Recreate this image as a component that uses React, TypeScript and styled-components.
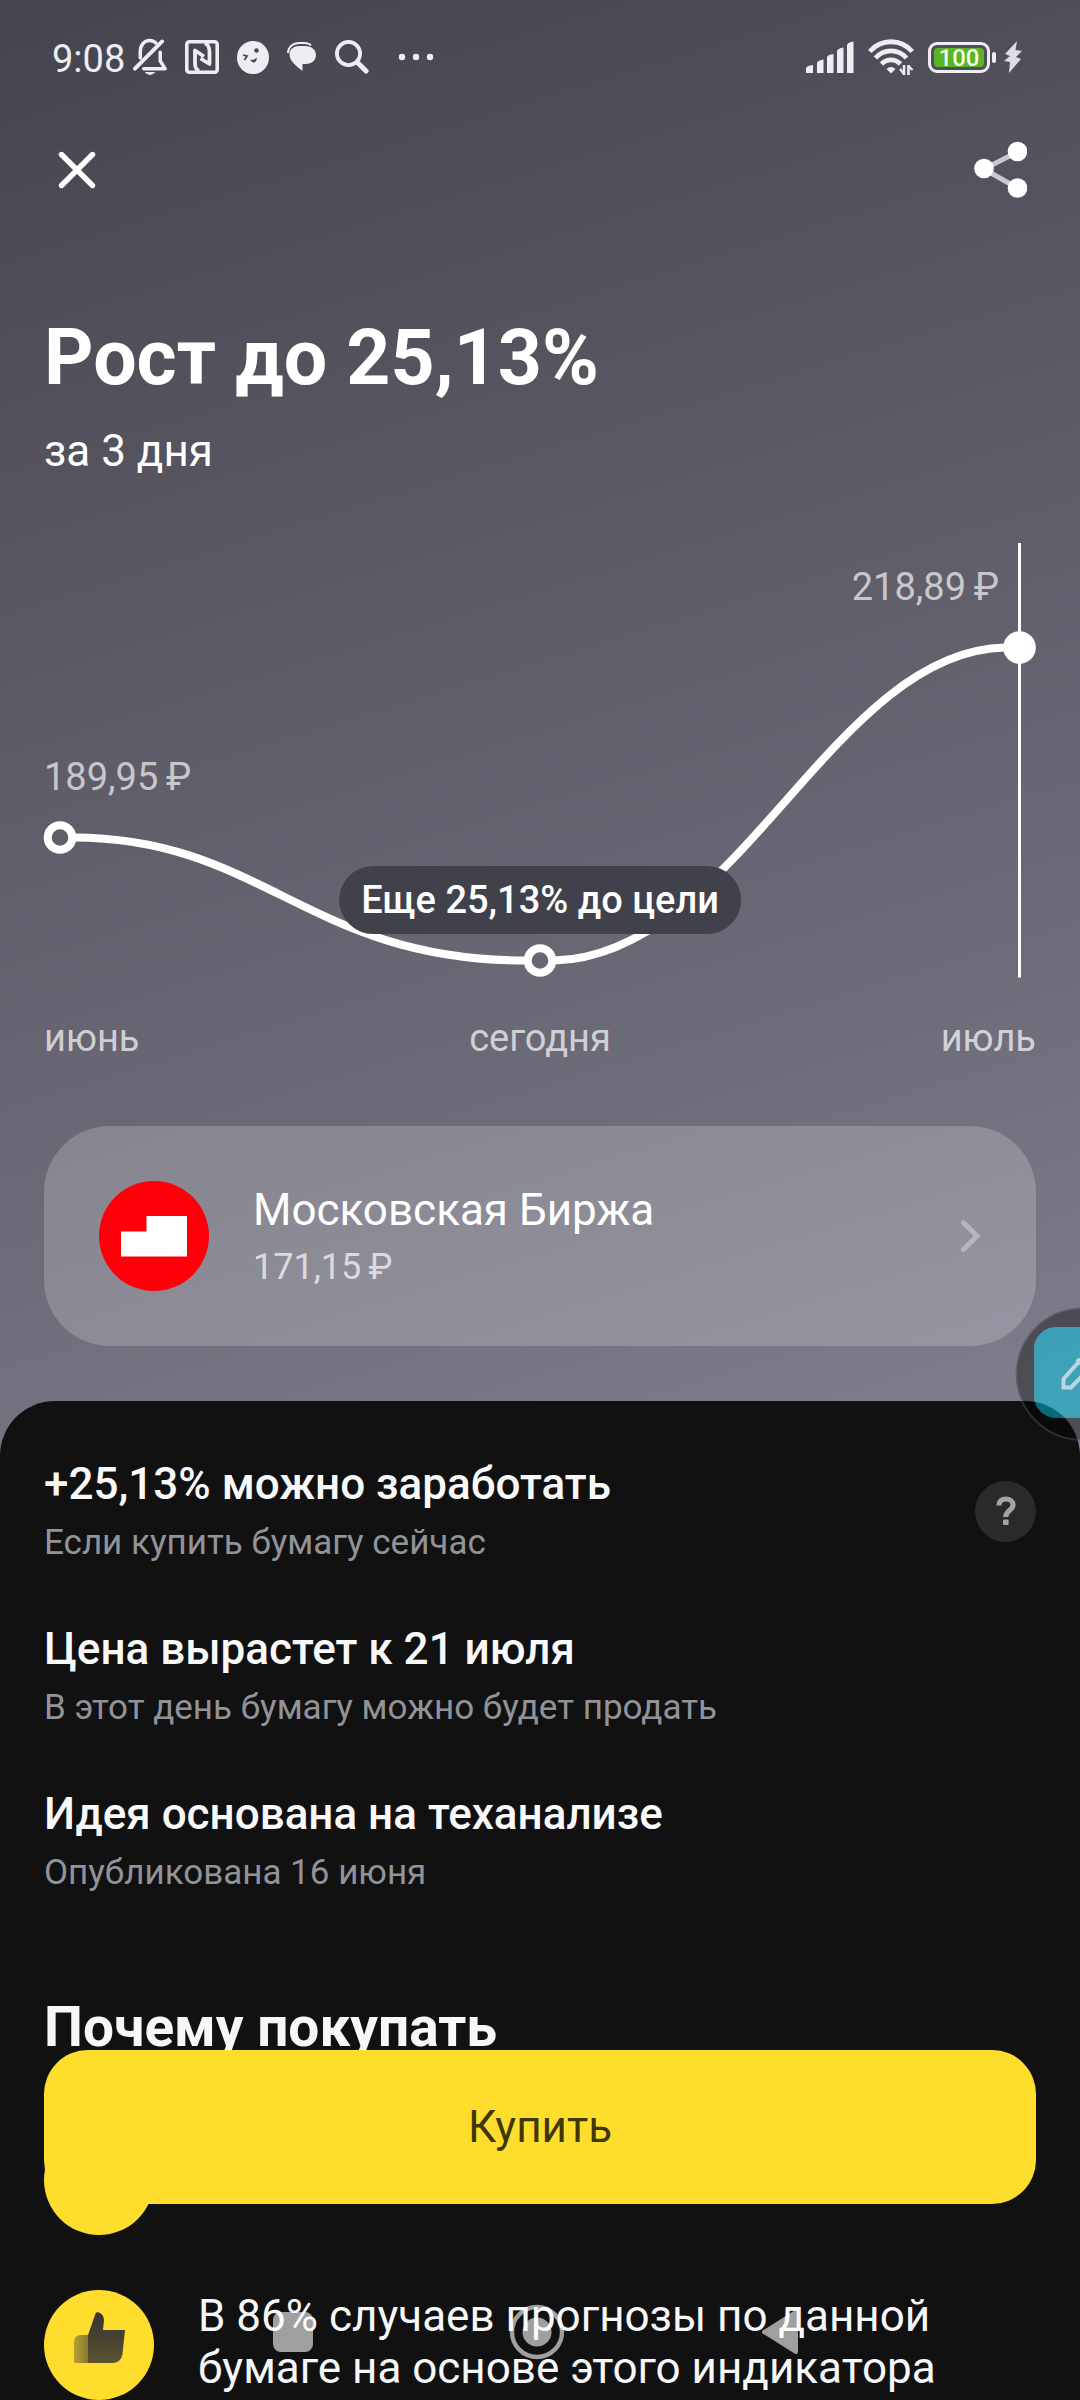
import React from "react";
import styled, { createGlobalStyle } from "styled-components";

const GlobalStyle = createGlobalStyle`
  *, *::before, *::after { box-sizing: border-box; }
  html, body { margin: 0; background: #111111; }
  body { font-family: Roboto, "Noto Sans", sans-serif; color: #ffffff; }
  h1, h2, h3, p, ul { margin: 0; padding: 0; }
  ul { list-style: none; }
  svg { display: block; flex: none; }
  button { font-family: inherit; border: 0; padding: 0; background: none; color: inherit; cursor: pointer; }
`;

const Page = styled.div`
  position: relative;
  min-height: 100vh;
  display: flex;
  flex-direction: column;
  overflow: hidden;
`;

const Hero = styled.section`
  padding: 0 44px 110px;
  margin-bottom: -55px;
  background: linear-gradient(163deg, #45444e 0%, #5c5b66 42%, #6d6c79 72%, #81808e 100%);
`;

const StatusBar = styled.div`
  height: 114px;
  display: flex;
  align-items: center;
  justify-content: space-between;
  padding: 0 14px 0 8px;
  color: #ededf2;
`;

const StatusGroup = styled.div<{ $gap: number }>`
  display: flex;
  align-items: center;
  gap: ${(p) => p.$gap}px;
`;

const Clock = styled.span`
  padding-top: 3px;
  font-size: 38px;
  line-height: 44px;
  margin-right: -10px;
`;

const Battery = styled.div`
  position: relative;
  width: 62px;
  height: 31px;
  padding: 3px;
  border: 3px solid #ededf2;
  border-radius: 9px;
  &::after {
    content: "";
    position: absolute;
    right: -9px;
    top: 7px;
    width: 4px;
    height: 11px;
    border-radius: 2px;
    background: #ededf2;
  }
`;

const BatteryLevel = styled.div`
  height: 100%;
  border-radius: 4px;
  background: #5ab427;
  color: #f4fbe8;
  font-size: 24px;
  font-weight: 500;
  line-height: 20px;
  text-align: center;
`;

const TopBar = styled.header`
  height: 112px;
  display: flex;
  align-items: center;
  justify-content: space-between;
  padding: 0 9px 0 14px;
`;

const IconButton = styled.button`
  display: flex;
`;

const Title = styled.h1`
  margin-top: 87px;
  font-size: 77px;
  line-height: 90px;
  font-weight: 700;
`;

const Period = styled.p`
  margin-top: 22px;
  font-size: 44px;
  line-height: 52px;
`;

const Chart = styled.div`
  position: relative;
  height: 437px;
  margin-top: 64px;
  & > svg { width: 100%; height: 100%; overflow: visible; }
`;

const PriceLabel = styled.span<{ $side: "left" | "right"; $inset: number; $top: number }>`
  position: absolute;
  top: ${(p) => p.$top}px;
  ${(p) => p.$side}: ${(p) => p.$inset}px;
  color: rgba(255, 255, 255, 0.68);
  font-size: 38px;
  line-height: 46px;
`;

const Tooltip = styled.div`
  position: absolute;
  top: 325px;
  left: 50%;
  transform: translateX(-50%);
  padding: 0 22px;
  border-radius: 34px;
  background: #41414b;
  font-size: 38px;
  font-weight: 500;
  line-height: 68px;
  white-space: nowrap;
`;

const Months = styled.div`
  display: flex;
  justify-content: space-between;
  margin-top: 37px;
  color: rgba(255, 255, 255, 0.7);
  font-size: 38px;
  line-height: 46px;
  & > span { flex: 1; }
  & > span:nth-child(2) { text-align: center; }
  & > span:nth-child(3) { text-align: right; }
`;

const StockCard = styled.button`
  width: 100%;
  height: 220px;
  margin-top: 65px;
  padding: 0 55px;
  display: flex;
  align-items: center;
  border-radius: 66px;
  background: rgba(255, 255, 255, 0.2);
  text-align: left;
`;

const StockText = styled.span`
  flex: 1;
  display: flex;
  flex-direction: column;
  gap: 10px;
  margin-left: 44px;
`;

const StockName = styled.span`
  font-size: 44px;
  line-height: 52px;
`;

const StockPrice = styled.span`
  font-size: 36px;
  line-height: 42px;
  color: rgba(255, 255, 255, 0.7);
`;

const Sheet = styled.main`
  position: relative;
  flex: 1;
  padding: 57px 44px 0;
  border-radius: 55px 55px 0 0;
  background: #111111;
`;

const Facts = styled.ul`
  display: flex;
  flex-direction: column;
  gap: 59px;
`;

const Fact = styled.li`
  display: flex;
  align-items: center;
  justify-content: space-between;
`;

const FactTitle = styled.h3`
  color: #f9f9f9;
  font-size: 44px;
  line-height: 52px;
  font-weight: 500;
`;

const FactNote = styled.p`
  margin-top: 12px;
  color: #919399;
  font-size: 35px;
  line-height: 42px;
`;

const HelpButton = styled.button`
  width: 61px;
  height: 61px;
  border-radius: 50%;
  background: #2a2a2a;
  display: flex;
  align-items: center;
  justify-content: center;
`;

const SectionTitle = styled.h2`
  margin-top: 101px;
  color: #f6f7f8;
  font-size: 55px;
  line-height: 64px;
  font-weight: 700;
`;

const Reasons = styled.ul`
  margin-top: 66px;
  display: flex;
  flex-direction: column;
  gap: 55px;
`;

const Reason = styled.li`
  display: flex;
  gap: 44px;
  color: #f6f7f8;
  font-size: 44px;
  line-height: 52px;
`;

const ReasonBadge = styled.span`
  flex: none;
  width: 110px;
  height: 110px;
  border-radius: 50%;
  background: #ffdd2d;
`;

const ReasonText = styled.p`
  max-width: 760px;
`;

const BuyButton = styled.button`
  position: fixed;
  left: 44px;
  right: 44px;
  bottom: 196px;
  height: 154px;
  border-radius: 44px;
  background: #ffdd2d;
  color: #3f3705;
  font-size: 44px;
  line-height: 52px;
`;

const SystemNav = styled.nav`
  position: fixed;
  left: 0;
  right: 8px;
  bottom: 40px;
  height: 56px;
  display: flex;
  align-items: center;
  justify-content: center;
  gap: 196px;
  opacity: 0.6;
`;

const Bubble = styled.button`
  position: fixed;
  top: 1307px;
  right: 0;
`;

const BellOff = () => (
  <svg width="34" height="38" viewBox="0 0 35 38" fill="none" stroke="currentColor" strokeWidth="3.6" strokeLinecap="round" strokeLinejoin="round">
    <path d="M7.500 20V14C7.500 6 12 2 17 2C20 2 22 3 23.500 4.500" />
    <path d="M28 14V23L33 31H11" />
    <path d="M2 31L30 3" strokeWidth="4" />
    <path d="M12 34.500H23Q21 37.500 17.500 37.500T12 34.500Z" fill="currentColor" stroke="none" />
  </svg>
);

const Nfc = () => (
  <svg width="34" height="34" viewBox="0 0 34 34" fill="none" stroke="currentColor" strokeLinejoin="round">
    <rect x="1.800" y="1.800" width="30.400" height="30.400" rx="2.500" strokeWidth="3.600" />
    <path d="M14 31C10.500 29 10 27 10 22V10.500L19 16.500" strokeWidth="3.800" />
    <path d="M20 3C23.500 5 24.500 7 24.500 12V24L15.500 18.500" strokeWidth="3.800" />
  </svg>
);

const Face = () => (
  <svg width="32" height="33" viewBox="0 0 32 33">
    <ellipse cx="16" cy="16.500" rx="16" ry="16.500" fill="currentColor" />
    <circle cx="19.500" cy="9.500" r="2.300" fill="#4a4953" />
    <path d="M6 14L10 15L7.500 19" fill="none" stroke="#4a4953" strokeWidth="1.800" />
    <path d="M13 18.500C16 19.500 18 18.500 19.500 16.500C20.500 20 17.500 23 14.500 20.500Z" fill="#4a4953" />
  </svg>
);

const Chat = () => (
  <svg width="30" height="30" viewBox="0 0 30 30">
    <path d="M1 11C1 5 6 1 12 1H17C20 1 23 2 24 3.500" fill="none" stroke="currentColor" strokeWidth="1.800" />
    <path d="M12 4H18C25 4 29 8 29 13C29 18 25 22 19 22H15.500V29C9 24 2.500 19 2.500 12C2.500 7 7 4 12 4Z" fill="currentColor" />
  </svg>
);

const Search = () => (
  <svg width="34" height="34" viewBox="0 0 34 34" fill="none" stroke="currentColor" strokeLinecap="round">
    <circle cx="13.500" cy="13.500" r="11.600" strokeWidth="3.800" />
    <path d="M22.500 22.500L31 31" strokeWidth="5.200" />
  </svg>
);

const Dots = () => (
  <svg width="48" height="8" viewBox="0 0 48 8" fill="currentColor">
    <circle cx="15" cy="4" r="3.200" />
    <circle cx="29" cy="4" r="3.200" />
    <circle cx="43" cy="4" r="3.200" />
  </svg>
);

const Signal = () => (
  <svg width="48" height="32" viewBox="0 0 48 32" fill="currentColor">
    <path d="M0 32V27Q1 24.500 7 24V32Z" />
    <path d="M11 32V22Q12 19 17.500 18.500V32Z" />
    <path d="M21 32V16Q22 13.500 27.500 13V32Z" />
    <path d="M31 32V10Q32 7 37.500 6.500V32Z" />
    <path d="M41 32V4Q42 1 47.500 0.500V32Z" />
  </svg>
);

const Wifi = () => (
  <svg width="46" height="36" viewBox="0 0 46 36" fill="none" stroke="currentColor" strokeWidth="4.800">
    <path d="M1.800 12.500C13 -0.500 33 -0.500 44.200 12.500" />
    <path d="M7.500 19C16 9.500 30 9.500 38.500 19" />
    <path d="M13.500 25C19 19.500 27 19.500 32.500 25" />
    <path d="M18.500 30Q23 26 27.500 30L23 34.500Z" fill="currentColor" stroke="none" />
    <path d="M36 26V36M40.500 26V36" strokeWidth="2.600" />
    <path d="M36 35L32 30M40.500 27L44.500 31" strokeWidth="2.200" />
  </svg>
);

const Bolt = () => (
  <svg width="18" height="32" viewBox="0 0 18 32" fill="#dcdce2">
    <path d="M13 0L1 13L6 15L0 20L6 21L5 32L17 18L12 16L18 10L11.500 9Z" />
  </svg>
);

const CloseIcon = () => (
  <svg width="38" height="38" viewBox="0 0 38 38" fill="none" stroke="#ffffff" strokeWidth="5.400" strokeLinecap="round">
    <path d="M3.500 3.500L34.500 34.500M34.500 3.500L3.500 34.500" />
  </svg>
);

const ShareIcon = () => (
  <svg width="54" height="58" viewBox="0 0 54 58">
    <path d="M44.500 11L11 28L44.500 47" fill="none" stroke="#c9c8d0" strokeWidth="5" />
    <circle cx="44.500" cy="10.500" r="9.800" fill="#ffffff" />
    <circle cx="11" cy="27.500" r="9.800" fill="#ffffff" />
    <circle cx="44.500" cy="47" r="9.800" fill="#ffffff" />
  </svg>
);

const ForecastCurve = () => (
  <svg viewBox="0 0 992 437" preserveAspectRatio="none" fill="none" aria-hidden="true">
    <path d="M975.500 2V436.500" stroke="#ffffff" strokeWidth="3" />
    <path d="M30 296.500C219 297 264 419.500 482 419.500" stroke="#ffffff" strokeWidth="8" />
    <path d="M510 419.500C693 415 788 110 961 106.500" stroke="#ffffff" strokeWidth="8" />
    <circle cx="16" cy="296.500" r="12.300" stroke="#ffffff" strokeWidth="8" />
    <circle cx="496" cy="419.500" r="12.300" stroke="#ffffff" strokeWidth="8" />
    <circle cx="975.500" cy="106.500" r="16.300" fill="#ffffff" />
  </svg>
);

const ExchangeLogo = () => (
  <svg width="110" height="110" viewBox="0 0 110 110">
    <circle cx="55" cy="55" r="55" fill="#ff000a" />
    <path d="M22 50.500H47.500V35H88V75.500H22Z" fill="#ffffff" />
  </svg>
);

const Chevron = () => (
  <svg width="20" height="32" viewBox="0 0 20 32" fill="none" stroke="#b6b6bf" strokeWidth="5" strokeLinecap="round" strokeLinejoin="miter">
    <path d="M2.500 2.800L16 16L2.500 29.500" />
  </svg>
);

const QuestionIcon = () => (
  <svg width="20" height="30" viewBox="0 0 20 30" fill="none" stroke="#a0a4ab" strokeWidth="5.200">
    <path d="M2.800 9.500C3 5 6 3 10 3C14 3 17 5.500 17 9C17 14.500 9.800 14 9.800 21" />
    <rect x="7" y="23.500" width="5.600" height="5.500" rx="1" fill="#a0a4ab" stroke="none" />
  </svg>
);

const Thumb = () => (
  <svg width="110" height="110" viewBox="0 0 110 110">
    <defs>
      <linearGradient id="hand" x1="0" y1="0" x2="0" y2="1">
        <stop offset="0" stopColor="#333333" />
        <stop offset="1" stopColor="#5c5331" />
      </linearGradient>
      <linearGradient id="cuff" x1="0" y1="0" x2="1" y2="0">
        <stop offset="0" stopColor="#b8a12f" />
        <stop offset="1" stopColor="#867833" />
      </linearGradient>
    </defs>
    <path d="M30 73V52Q30 45 37 45H44V73Z" fill="url(#cuff)" />
    <path d="M44 73V45L51.500 23.500Q52.500 21.500 55 22.500Q60 24.500 60 30L59 40H81L78.500 64Q77 73 68 73Z" fill="url(#hand)" />
  </svg>
);

const BubbleIcon = () => (
  <svg width="65" height="134" viewBox="0 0 65 134" fill="none">
    <path fillRule="evenodd" d="M67 0.500A66.500 66.500 0 0 0 67 133.500ZM67 20H41A22 22 0 0 0 19 42V89A22 22 0 0 0 41 111H67Z" fill="rgba(0,0,0,0.38)" />
    <circle cx="67" cy="67" r="65.800" stroke="rgba(170,170,180,0.22)" strokeWidth="2" />
    <path d="M65 20H41A22 22 0 0 0 19 42V89A22 22 0 0 0 41 111H65Z" fill="rgba(0,198,228,0.5)" />
    <path d="M68 50.500L64 54.500L48.500 72V80.500H56L70 66M62 52L69 60" stroke="#bcd6de" strokeWidth="4" />
  </svg>
);

const RecentIcon = () => (
  <svg width="40" height="40" viewBox="0 0 40 40">
    <rect width="40" height="40" rx="8" fill="#ffffff" />
  </svg>
);

const HomeIcon = () => (
  <svg width="56" height="56" viewBox="0 0 56 56">
    <circle cx="28" cy="28" r="25" fill="none" stroke="#ffffff" strokeWidth="4.400" />
    <circle cx="28" cy="28" r="14.500" fill="#ffffff" />
  </svg>
);

const BackIcon = () => (
  <svg width="38" height="46" viewBox="0 0 38 46">
    <path d="M35 3V43L3 23Z" fill="#ffffff" stroke="#ffffff" strokeWidth="4" strokeLinejoin="round" />
  </svg>
);

const facts = [
  { title: "+25,13% можно заработать", note: "Если купить бумагу сейчас", help: true },
  { title: "Цена вырастет к 21 июля", note: "В этот день бумагу можно будет продать", help: false },
  { title: "Идея основана на теханализе", note: "Опубликована 16 июня", help: false },
];

export default function App() {
  return (
    <Page>
      <GlobalStyle />
      <Hero>
        <StatusBar>
          <StatusGroup $gap={18}>
            <Clock>9:08</Clock>
            <BellOff />
            <Nfc />
            <Face />
            <Chat />
            <Search />
            <Dots />
          </StatusGroup>
          <StatusGroup $gap={14}>
            <Signal />
            <Wifi />
            <Battery>
              <BatteryLevel>100</BatteryLevel>
            </Battery>
            <Bolt />
          </StatusGroup>
        </StatusBar>
        <TopBar>
          <IconButton aria-label="Закрыть"><CloseIcon /></IconButton>
          <IconButton aria-label="Поделиться"><ShareIcon /></IconButton>
        </TopBar>
        <Title>Рост до 25,13%</Title>
        <Period>за 3 дня</Period>
        <Chart>
          <ForecastCurve />
          <PriceLabel $side="left" $inset={0} $top={213}>{"189,95\u2009₽"}</PriceLabel>
          <PriceLabel $side="right" $inset={37} $top={23}>{"218,89\u2009₽"}</PriceLabel>
          <Tooltip>Еще 25,13% до цели</Tooltip>
        </Chart>
        <Months>
          <span>июнь</span>
          <span>сегодня</span>
          <span>июль</span>
        </Months>
        <StockCard>
          <ExchangeLogo />
          <StockText>
            <StockName>Московская Биржа</StockName>
            <StockPrice>{"171,15\u2009₽"}</StockPrice>
          </StockText>
          <Chevron />
        </StockCard>
      </Hero>
      <Sheet>
        <Facts>
          {facts.map((fact) => (
            <Fact key={fact.title}>
              <div>
                <FactTitle>{fact.title}</FactTitle>
                <FactNote>{fact.note}</FactNote>
              </div>
              {fact.help && (
                <HelpButton aria-label="Подробнее"><QuestionIcon /></HelpButton>
              )}
            </Fact>
          ))}
        </Facts>
        <SectionTitle>Почему покупать</SectionTitle>
        <Reasons>
          <Reason><ReasonBadge /></Reason>
          <Reason>
            <ReasonBadge><Thumb /></ReasonBadge>
            <ReasonText>В 86% случаев прогнозы по данной бумаге на основе этого индикатора</ReasonText>
          </Reason>
        </Reasons>
      </Sheet>
      <BuyButton>Купить</BuyButton>
      <SystemNav>
        <IconButton aria-label="Недавние"><RecentIcon /></IconButton>
        <IconButton aria-label="Домой"><HomeIcon /></IconButton>
        <IconButton aria-label="Назад"><BackIcon /></IconButton>
      </SystemNav>
      <Bubble aria-label="Редактировать"><BubbleIcon /></Bubble>
    </Page>
  );
}
